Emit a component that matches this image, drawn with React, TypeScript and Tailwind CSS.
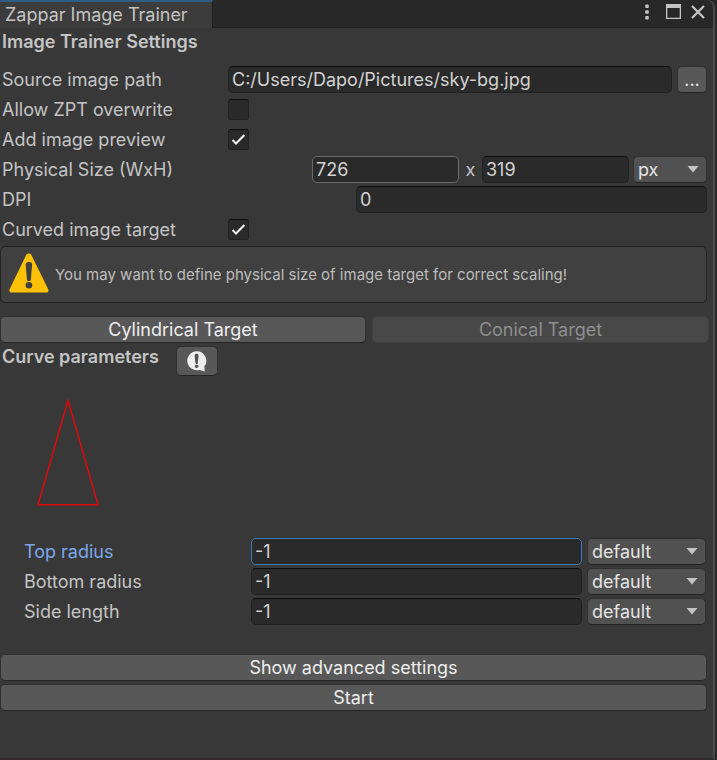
import React, { useState } from 'react';

const fieldBase =
  'h-[27px] min-w-0 rounded-[5px] border bg-[#2a2a2a] px-[3px] text-[18px] leading-6 text-[#d2d2d2] outline-none';

const fieldClass = `${fieldBase} border-[#212121] border-t-[#0d0d0d]`;
const hoveredFieldClass = `${fieldBase} border-[#6a6a6a]`;
const focusedFieldClass = `${fieldBase} border-[#3a79bb]`;

const buttonClass =
  'h-[27px] rounded-[5px] border border-[#303030] border-b-[#242424] bg-[#585858] text-center text-[18px] leading-6 text-[#eeeeee]';

const Row: React.FC<{ label: string; htmlFor: string; children: React.ReactNode }> = ({ label, htmlFor, children }) => (
  <div className="flex h-[27px] items-center">
    <label htmlFor={htmlFor} className="w-[228px] shrink-0 pl-0.5 text-[18px] leading-6">
      {label}
    </label>
    {children}
  </div>
);

const Toggle: React.FC<{ id: string; checked: boolean; onChange: (value: boolean) => void }> = ({ id, checked, onChange }) => (
  <span className="relative h-[21px] w-[21px]">
    <input
      id={id}
      type="checkbox"
      checked={checked}
      onChange={(e) => onChange(e.target.checked)}
      className="block h-[21px] w-[21px] appearance-none rounded-[3px] border border-[#212121] border-t-[#0d0d0d] bg-[#2a2a2a]"
    />
    {checked && (
      <svg className="pointer-events-none absolute inset-0" width="21" height="21" viewBox="0 0 21 21" fill="none">
        <path d="M4.6 11l3.4 3.6L16.4 6" stroke="#f0f0f0" strokeWidth="2.1" />
      </svg>
    )}
  </span>
);

const Dropdown: React.FC<{ label: string; options: string[]; className: string }> = ({ label, options, className }) => (
  <span className={`relative shrink-0 ${className}`}>
    <select
      aria-label={label}
      className="block h-[27px] w-full appearance-none rounded-[5px] border border-[#303030] border-b-[#242424] bg-[#515151] pl-1 text-[18px] leading-6 text-[#e4e4e4] outline-none"
    >
      {options.map((option) => (
        <option key={option}>{option}</option>
      ))}
    </select>
    <svg className="pointer-events-none absolute top-2.5 right-2" width="12" height="7" viewBox="0 0 12 7">
      <path d="M.5 0h11L6 6.5z" fill="#c4c4c4" />
    </svg>
  </span>
);

const radii = [
  { id: 'top-radius', label: 'Top radius' },
  { id: 'bottom-radius', label: 'Bottom radius' },
  { id: 'side-length', label: 'Side length' },
];

const App: React.FC = () => {
  const [overwrite, setOverwrite] = useState(false);
  const [preview, setPreview] = useState(true);
  const [curved, setCurved] = useState(true);
  const [active, setActive] = useState('top-radius');

  return (
    <div className="flex min-h-screen bg-[#282828] pr-0.5 font-['Inter',sans-serif] text-[18px] leading-6 text-[#c4c4c4]">
      <div className="flex min-w-0 flex-1 flex-col rounded-tr-lg border-r-2 border-b-2 border-r-[#4b4b4b] border-b-[#322b2d] bg-[#383838]">
        <header className="flex h-7 items-stretch rounded-tr-lg border-b border-[#232323] bg-[#282828]">
          <h1 className="-mb-px w-[213px] border-t-2 border-r border-t-[#2c5d87] border-r-[#202020] bg-[#3c3c3c] pl-[5px] text-[18px] leading-[26px] whitespace-nowrap">
            Zappar Image Trainer
          </h1>
          <div className="ml-auto flex items-center pr-2 pb-1">
            <button type="button" aria-label="Menu" className="mr-[17px] h-4 w-1">
              <svg width="4" height="16" viewBox="0 0 4 16" fill="#c4c4c4">
                <rect x=".2" y=".5" width="3.6" height="3.6" rx="1" />
                <rect x=".2" y="6.2" width="3.6" height="3.6" rx="1" />
                <rect x=".2" y="11.9" width="3.6" height="3.6" rx="1" />
              </svg>
            </button>
            <button type="button" aria-label="Maximize" className="mr-2.5 h-[15px] w-[15px]">
              <svg width="15" height="15" viewBox="0 0 15 15">
                <path d="M0 0h15v15H0zM1.3 4v9.7h12.4V4z" fill="#c4c4c4" fillRule="evenodd" />
              </svg>
            </button>
            <button type="button" aria-label="Close" className="h-3.5 w-3.5">
              <svg width="14" height="14" viewBox="0 0 14 14">
                <path d="M1 1l12 12M13 1L1 13" stroke="#c4c4c4" strokeWidth="2.2" />
              </svg>
            </button>
          </div>
        </header>

        <main className="flex flex-col pr-1.5">
          <h2 className="mt-0.5 mb-3 pl-0.5 text-[18px] leading-6 font-semibold">Image Trainer Settings</h2>

          <div className="flex flex-col gap-[3px]">
            <Row label="Source image path" htmlFor="source">
              <input id="source" type="text" defaultValue="C:/Users/Dapo/Pictures/sky-bg.jpg" className={`${fieldClass} flex-1`} />
              <button type="button" aria-label="Browse" className={`${buttonClass} ml-[5px] w-[30px]`}>
                ...
              </button>
            </Row>
            <Row label="Allow ZPT overwrite" htmlFor="overwrite">
              <Toggle id="overwrite" checked={overwrite} onChange={setOverwrite} />
            </Row>
            <Row label="Add image preview" htmlFor="preview">
              <Toggle id="preview" checked={preview} onChange={setPreview} />
            </Row>
            <Row label="Physical Size (WxH)" htmlFor="width">
              <div className="ml-auto flex w-[395px] items-center">
                <input id="width" type="text" defaultValue="726" className={`${hoveredFieldClass} flex-1`} />
                <label htmlFor="height" className="w-[23px] text-center">
                  x
                </label>
                <input id="height" type="text" defaultValue="319" className={`${fieldClass} flex-1`} />
                <Dropdown label="Unit" options={['px', 'mm', 'cm', 'in']} className="ml-1 w-[74px]" />
              </div>
            </Row>
            <Row label="DPI" htmlFor="dpi">
              <input id="dpi" type="text" defaultValue="0" className={`${fieldClass} ml-auto w-[351px]`} />
            </Row>
            <Row label="Curved image target" htmlFor="curved">
              <Toggle id="curved" checked={curved} onChange={setCurved} />
            </Row>
          </div>

          <div className="mt-[3px] flex h-[57px] items-center rounded-[5px] border border-[#232323] bg-[#404040] pl-2">
            <svg className="mb-1 shrink-0" width="40" height="40" viewBox="0 0 40 40">
              <path d="M17.2 2c1-2 4-2 5.2 0l16.8 34.2c.8 1.7-.1 3.4-2 3.4H2.6c-1.9 0-2.7-1.7-2-3.4z" fill="#ffc107" />
              <path d="M16.7 11.5c0-3.2 6.4-3.2 6.4 0l-1.2 15c-.3 2.3-3.7 2.3-4 0z" fill="#404040" />
              <circle cx="19.9" cy="32.3" r="3.3" fill="#404040" />
            </svg>
            <p className="ml-1.5 text-[15px] leading-5 text-[#bdbdbd]">
              You may want to define physical size of image target for correct scaling!
            </p>
          </div>

          <div className="-mr-0.5 mt-[13px] flex gap-1.5">
            <button type="button" className={`${buttonClass} w-[366px]`}>
              Cylindrical Target
            </button>
            <button
              type="button"
              disabled
              className="h-[27px] flex-1 rounded-[5px] border border-[#404040] bg-[#484848] text-[18px] leading-6 text-[#8e8e8e]"
            >
              Conical Target
            </button>
          </div>

          <div className="mt-[3px] flex items-start">
            <h2 className="-mt-px w-[176px] pl-0.5 text-[18px] leading-6 font-semibold">Curve parameters</h2>
            <button
              type="button"
              aria-label="Help"
              className="flex h-[30px] w-[42px] items-center justify-center rounded-[5px] border border-[#303030] border-b-[#242424] bg-[#585858]"
            >
              <svg width="20" height="21" viewBox="0 0 20 21">
                <path d="M9.5.3a9.5 9.5 0 1 0 3 18.6l5.3 1.7-.5-5A9.5 9.5 0 0 0 9.5.3z" fill="#eeeeee" />
                <path d="M7.7 4.500c0-2.200 3.800-2.200 3.800 0l-.7 7.500c-.2 1.300-2.200 1.300-2.400 0z" fill="#505050" />
                <circle cx="9.6" cy="15.2" r="1.7" fill="#505050" />
              </svg>
            </button>
          </div>

          <svg className="mt-5 ml-9" width="64" height="112" viewBox="0 0 64 112" fill="none">
            <path d="M32 4.5L2 108.800h60z" stroke="#e00808" strokeWidth="1.5" />
          </svg>

          <div className="mt-[30px] flex flex-col gap-[3px] pl-6">
            {radii.map(({ id, label }) => (
              <div key={id} className="flex h-[27px] items-center">
                <label htmlFor={id} className={`w-[227px] shrink-0 ${active === id ? 'text-[#7ba7e8]' : ''}`}>
                  {label}
                </label>
                <input
                  id={id}
                  type="text"
                  defaultValue="-1"
                  onFocus={() => setActive(id)}
                  className={`flex-1 ${active === id ? focusedFieldClass : fieldClass}`}
                />
                <Dropdown label={`${label} unit`} options={['default', 'px', 'mm']} className="mr-px ml-[5px] w-[119px]" />
              </div>
            ))}
          </div>

          <div className="mt-[29px] flex flex-col gap-[3px]">
            <button type="button" className={buttonClass}>
              Show advanced settings
            </button>
            <button type="button" className={buttonClass}>
              Start
            </button>
          </div>
        </main>
      </div>
    </div>
  );
};

export default App;
